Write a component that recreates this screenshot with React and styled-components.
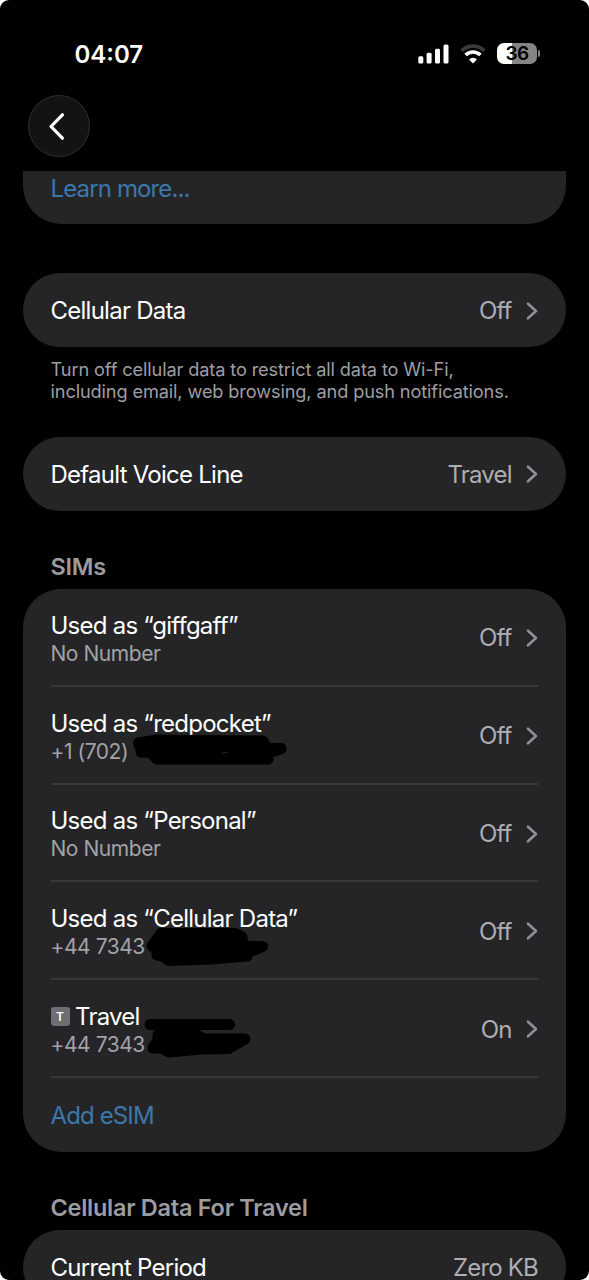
import styled, { createGlobalStyle } from "styled-components";

const GlobalStyle = createGlobalStyle`
  * {
    box-sizing: border-box;
  }
  body {
    margin: 0;
    background: #ffffff;
    font-family: Inter, "Liberation Sans", sans-serif;
    -webkit-font-smoothing: antialiased;
  }
`;

const Screen = styled.div`
  display: flex;
  flex-direction: column;
  height: 1280px;
  overflow: hidden;
  background: #000000;
  border-radius: 9px;
`;

const StatusBar = styled.header`
  display: flex;
  align-items: center;
  justify-content: space-between;
  height: 95px;
  padding: 12px 49px 0 74.5px;
  flex: none;
`;

const Time = styled.div`
  padding-top: 3px;
  font-size: 24px;
  font-weight: 600;
  line-height: 30px;
  color: #ffffff;
`;

const StatusIcons = styled.div`
  display: flex;
  align-items: center;
  gap: 11px;
`;

const Battery = styled.div`
  display: flex;
  align-items: center;
  gap: 1px;
`;

const BatteryBody = styled.div`
  width: 40px;
  height: 21px;
  border-radius: 7px;
  background: linear-gradient(90deg, #ffffff 37%, #858585 37%);
  font-size: 19px;
  font-weight: 600;
  line-height: 22px;
  letter-spacing: -0.5px;
  text-align: center;
  color: #000000;
`;

const BatteryCap = styled.div`
  width: 2px;
  height: 7px;
  border-radius: 0 2px 2px 0;
  background: #858585;
`;

const NavBar = styled.nav`
  display: flex;
  height: 76px;
  padding-left: 28px;
  flex: none;
`;

const BackButton = styled.button`
  display: flex;
  align-items: center;
  justify-content: center;
  width: 62px;
  height: 62px;
  padding: 0 4px 0 0;
  border: 1px solid #303032;
  border-radius: 50%;
  background: #131313;
`;

const List = styled.main`
  display: flex;
  flex-direction: column;
  padding: 0 23px;
`;

const Card = styled.section`
  flex: none;
  padding: 0 28px 0 27.5px;
  border-radius: 38px;
  background: #252527;
  margin-top: ${(props) => props.$top || 0}px;
`;

const ClippedCard = styled(Card)`
  height: 53px;
  border-radius: 0 0 38px 38px;
  padding-top: 3px;
`;

const Row = styled.div`
  position: relative;
  display: flex;
  align-items: center;
  height: ${(props) => props.$height || 74}px;
  padding-top: 1px;
  border-bottom: ${(props) => (props.$divided ? "2px solid #38383a" : "none")};
`;

const Labels = styled.div`
  flex: 1;
`;

const Title = styled.div`
  display: flex;
  align-items: center;
  gap: 5.5px;
  font-size: 24px;
  line-height: 29px;
  letter-spacing: -0.75px;
  white-space: nowrap;
  color: #ffffff;
`;

const Subtitle = styled.div`
  font-size: 21px;
  line-height: 27px;
  letter-spacing: -0.45px;
  white-space: nowrap;
  color: #a2a2a6;
`;

const Value = styled.div`
  padding-top: 1px;
  font-size: 24px;
  line-height: 30px;
  letter-spacing: -0.8px;
  color: #adadb2;
`;

const Link = styled.a`
  font-size: 24px;
  line-height: 30px;
  letter-spacing: -0.87px;
  color: #3b78ab;
`;

const Footnote = styled.p`
  margin: 11px 28px 0 27.5px;
  font-size: 18.2px;
  line-height: 22px;
  letter-spacing: -0.13px;
  white-space: nowrap;
  color: #9e9ea2;
`;

const Heading = styled.h2`
  margin: ${(props) => props.$top}px 28px 0 27.5px;
  font-size: 23.5px;
  font-weight: 600;
  line-height: 30px;
  letter-spacing: -0.27px;
  color: #9c9ca0;
`;

const LineBadge = styled.span`
  width: 19px;
  height: 19px;
  border-radius: 3px;
  background: #6f6f73;
  font-size: 12px;
  font-weight: 600;
  line-height: 19px;
  letter-spacing: 0;
  text-align: center;
`;

const Arrow = styled.svg`
  flex: none;
  margin-left: 14.3px;
`;

// Marker strokes, drawn over the row from its top left corner
const Marker = styled.svg`
  position: absolute;
  left: 0;
  top: 0;
  fill: #000000;
  stroke: #000000;
  stroke-width: 11px;
  stroke-linecap: round;
  stroke-linejoin: round;
`;

const Speck = styled.path`
  stroke: #29292b;
  stroke-width: 1px;
`;

const Chevron = () => (
  <Arrow width="12" height="20" viewBox="0 0 12 20" fill="none">
    <path
      d="M2 2.7 L10 10 L2 17.3"
      stroke="#8f8f94"
      strokeWidth="2.6"
      strokeLinecap="round"
      strokeLinejoin="round"
    />
  </Arrow>
);

const Signal = () => (
  <svg width="32" height="20" viewBox="0 0 32 20" fill="#fff">
    <rect x="1.3" y="12.3" width="5" height="7.2" rx="1.5" />
    <rect x="9.6" y="8.8" width="5" height="10.7" rx="1.5" />
    <rect x="18" y="4.8" width="5" height="14.7" rx="1.5" />
    <rect x="26.5" y="0.5" width="5" height="19" rx="1.5" />
  </svg>
);

const Wifi = () => (
  <svg width="26" height="20" viewBox="0 0 26 20" fill="none">
    <path d="M1.6 6.8 A16.2 16.2 0 0 1 24.4 6.8" stroke="#3a3a3a" strokeWidth="3.6" />
    <path d="M5.6 11 A10.5 10.5 0 0 1 20.4 11" stroke="#fff" strokeWidth="3.6" />
    <path d="M13 19.4 L9.1 15.4 A5.6 5.6 0 0 1 16.9 15.4 Z" fill="#fff" />
  </svg>
);

const RedpocketMarker = () => (
  <Marker width="250" height="90" viewBox="0 0 250 90">
    <path d="M87.5 56 L107 53 L212 54 L216 62 L230 61.5 L218 66 L217 72 L106 72 L99 65 L91 65 Z" />
    <path d="M90 65 L230 61.5" />
    <Speck d="M171 66 L176 65.5" />
  </Marker>
);

const CellularMarker = () => (
  <Marker width="250" height="90" viewBox="0 0 250 90">
    <path d="M110 51.5 L184 51.5 L191 55 L192 64.5 L211.5 64.5 L198 70 L196 74 L160 77 L118 78.5 L112 74.5 L106 73 L106 68 L101 64 Z" />
  </Marker>
);

const TravelMarker = () => (
  <Marker width="250" height="90" viewBox="0 0 250 90">
    <path d="M99 44.5 L178.5 44.5" />
    <path d="M107 55 L146 55 L152 59 L194 59 L180 67 L178 68.5 L150 69 L118 72 L112 68.5 L102 68 L107 60 Z" />
  </Marker>
);

const sims = [
  { name: "Used as “giffgaff”", number: "No Number", status: "Off" },
  { name: "Used as “redpocket”", number: "+1 (702)", status: "Off", Hidden: RedpocketMarker },
  { name: "Used as “Personal”", number: "No Number", status: "Off" },
  { name: "Used as “Cellular Data”", number: "+44 7343", status: "Off", Hidden: CellularMarker },
  { name: "Travel", badge: "T", number: "+44 7343", status: "On", Hidden: TravelMarker },
];

const SimRow = ({ name, badge, number, status, Hidden }) => (
  <Row $height={97.8} $divided>
    <Labels>
      <Title>
        {badge && <LineBadge>{badge}</LineBadge>}
        {name}
      </Title>
      <Subtitle>{number}</Subtitle>
    </Labels>
    <Value>{status}</Value>
    <Chevron />
    {Hidden && <Hidden />}
  </Row>
);

const SettingRow = ({ title, value }) => (
  <Row>
    <Labels>
      <Title>{title}</Title>
    </Labels>
    <Value>{value}</Value>
    <Chevron />
  </Row>
);

const SimCard = styled(Card)`
  ${Row} {
    padding-top: 2px;
  }
  ${Labels} {
    padding-top: 1.5px;
  }
`;

const App = () => {
  return (
    <>
      <GlobalStyle />
      <Screen>
        <StatusBar>
          <Time>04:07</Time>
          <StatusIcons>
            <Signal />
            <Wifi />
            <Battery>
              <BatteryBody>36</BatteryBody>
              <BatteryCap />
            </Battery>
          </StatusIcons>
        </StatusBar>
        <NavBar>
          <BackButton aria-label="Back">
            <svg width="18" height="30" viewBox="0 0 18 30" fill="none">
              <path
                d="M14.4 3.8 L3 15.5 L14.4 27.2"
                stroke="#fff"
                strokeWidth="3.2"
                strokeLinecap="round"
                strokeLinejoin="round"
              />
            </svg>
          </BackButton>
        </NavBar>
        <List>
          <ClippedCard>
            <Link>Learn more...</Link>
          </ClippedCard>
          <Card $top={49.3}>
            <SettingRow title="Cellular Data" value="Off" />
          </Card>
          <Footnote>
            Turn off cellular data to restrict all data to Wi-Fi,
            <br />
            including email, web browsing, and push notifications.
          </Footnote>
          <Card $top={34.7}>
            <SettingRow title="Default Voice Line" value="Travel" />
          </Card>
          <Heading $top={41}>SIMs</Heading>
          <SimCard $top={7.1}>
            {sims.map((sim) => (
              <SimRow key={sim.name} {...sim} />
            ))}
            <Row>
              <Link>Add eSIM</Link>
            </Row>
          </SimCard>
          <Heading $top={40.5}>Cellular Data For Travel</Heading>
          <Card $top={7.5}>
            <Row>
              <Labels>
                <Title>Current Period</Title>
              </Labels>
              <Value>Zero KB</Value>
            </Row>
          </Card>
        </List>
      </Screen>
    </>
  );
};

export default App;
